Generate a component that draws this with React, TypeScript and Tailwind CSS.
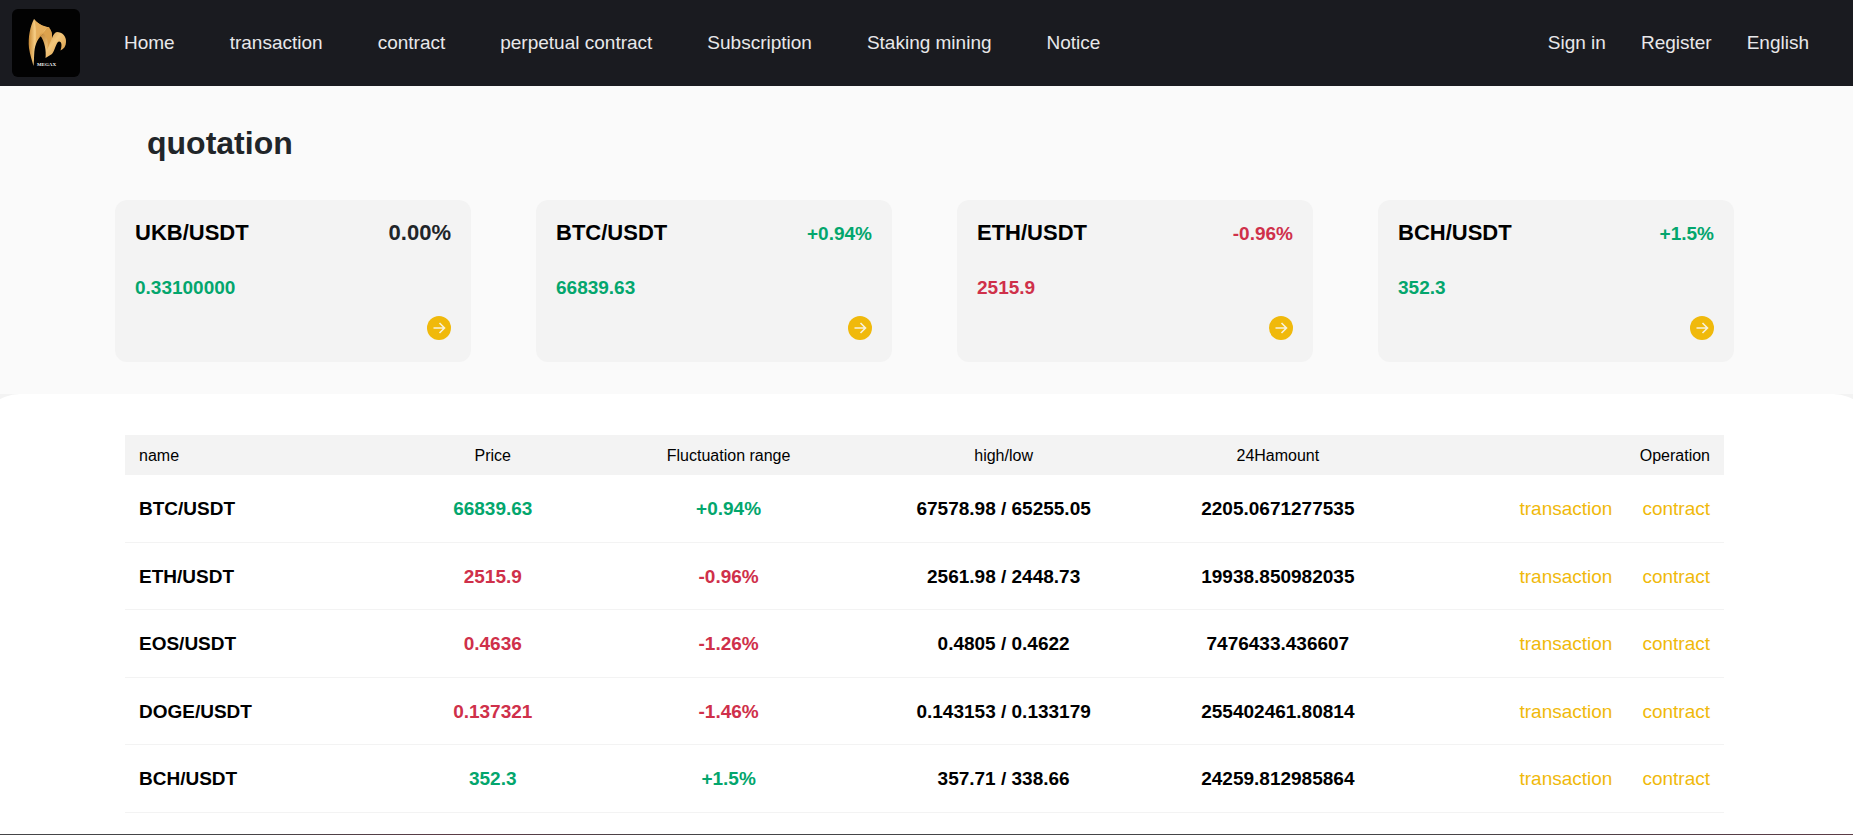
import clsx from 'clsx'

type Quote = {
  pair: string
  price: string
  change: string
  isUp: boolean
  highLow: string
  amount: string
}

const NAV_ITEMS = [
  'Home',
  'transaction',
  'contract',
  'perpetual contract',
  'Subscription',
  'Staking mining',
  'Notice',
]

const CARDS = [
  { pair: 'UKB/USDT', price: '0.33100000', change: '0.00%', trend: 'flat' },
  { pair: 'BTC/USDT', price: '66839.63', change: '+0.94%', trend: 'up' },
  { pair: 'ETH/USDT', price: '2515.9', change: '-0.96%', trend: 'down' },
  { pair: 'BCH/USDT', price: '352.3', change: '+1.5%', trend: 'up' },
]

const QUOTES: Quote[] = [
  {
    pair: 'BTC/USDT',
    price: '66839.63',
    change: '+0.94%',
    isUp: true,
    highLow: '67578.98 / 65255.05',
    amount: '2205.0671277535',
  },
  {
    pair: 'ETH/USDT',
    price: '2515.9',
    change: '-0.96%',
    isUp: false,
    highLow: '2561.98 / 2448.73',
    amount: '19938.850982035',
  },
  {
    pair: 'EOS/USDT',
    price: '0.4636',
    change: '-1.26%',
    isUp: false,
    highLow: '0.4805 / 0.4622',
    amount: '7476433.436607',
  },
  {
    pair: 'DOGE/USDT',
    price: '0.137321',
    change: '-1.46%',
    isUp: false,
    highLow: '0.143153 / 0.133179',
    amount: '255402461.80814',
  },
  {
    pair: 'BCH/USDT',
    price: '352.3',
    change: '+1.5%',
    isUp: true,
    highLow: '357.71 / 338.66',
    amount: '24259.812985864',
  },
]

const Logo = () => (
  <svg viewBox="0 0 68 68" className="size-[68px] shrink-0" role="img" aria-label="MEGAX">
    <defs>
      <linearGradient id="gold" x1="0" y1="0" x2="1" y2="0">
        <stop offset="0" stopColor="#c98a35" />
        <stop offset="0.3" stopColor="#f6cd85" />
        <stop offset="0.55" stopColor="#d99a44" />
        <stop offset="0.8" stopColor="#f0bd6c" />
        <stop offset="1" stopColor="#d7963f" />
      </linearGradient>
      <linearGradient id="goldFold" x1="0" y1="0" x2="1" y2="1">
        <stop offset="0" stopColor="#b87a2c" />
        <stop offset="0.5" stopColor="#f3c77c" />
        <stop offset="1" stopColor="#d6953e" />
      </linearGradient>
    </defs>
    <rect width="68" height="68" rx="6" fill="#020202" />
    <path
      d="M22 10C18 18 16 28 17 39C18 46 20 51 21.500 57C22.500 50 21.500 41 24 35C25.500 31 27 29 29 27L37 18.500C31 18 25 14 22 10Z"
      fill="url(#gold)"
    />
    <path d="M22 10C25 14 31 17.500 38 18.500C32 20 27 25 23.500 34C25 25 24 17 22 10Z" fill="#e5ae5c" />
    <path
      d="M28.500 27L36.500 18.500C39 20 40.500 25 40 29C41.500 25.500 43 23 45 23C50 23 54.500 27 54 33C54 37 52 40 48.500 41.500C50 37 50 32.500 47 32.500C44 33 43 42 40 45L33.500 49C34.500 42 32.500 32 28.500 27Z"
      fill="url(#goldFold)"
    />
    <path d="M36.500 18.500C39 20 40.500 25 40 29L35 41C37 33 35 27 31 24.500Z" fill="#dda24d" />
    <text
      x="34.500"
      y="57"
      textAnchor="middle"
      fontFamily="Liberation Serif, serif"
      fontWeight="700"
      fontSize="5"
      fill="#f2f2f2"
    >
      MEGAX
    </text>
  </svg>
)

const ArrowIcon = () => (
  <svg viewBox="0 0 24 24" className="size-6" aria-hidden="true">
    <circle cx="12" cy="12" r="12" fill="#f0b90b" />
    <path d="M6.5 12H17.5M12.5 7L17.5 12L12.5 17" fill="none" stroke="#f8f1dc" strokeWidth="1.6" />
  </svg>
)

const Header = () => (
  <header className="flex h-[86px] items-center bg-[#1a1b20] pl-3 pr-11 text-[19px] text-[#e8e8ea]">
    <a href="#">
      <Logo />
    </a>
    <nav className="ml-11 flex gap-[55px] whitespace-nowrap">
      {NAV_ITEMS.map((item) => (
        <a key={item} href="#">
          {item}
        </a>
      ))}
    </nav>
    <div className="ml-auto flex gap-[35px] whitespace-nowrap">
      <a href="#">Sign in</a>
      <a href="#">Register</a>
      <button type="button">English</button>
    </div>
  </header>
)

const App = () => {
  return (
    <div className="bg-[#fafafa] font-['Liberation_Sans',Arial,sans-serif] text-black">
      <Header />
      <section className="pl-[115px] pr-[119px] pb-8">
        <h1 className="px-8 py-[33px] text-[32px] leading-[48px] font-bold text-[#212529]">quotation</h1>
        <div className="grid grid-cols-4 gap-[65px]">
          {CARDS.map(({ pair, price, change, trend }) => (
            <article key={pair} className="rounded-xl bg-[#f3f3f3] px-5 pt-[17px] pb-[22px]">
              <div className="flex h-8 items-baseline justify-between leading-8 font-bold">
                <h2 className="text-[22px]">{pair}</h2>
                <span
                  className={clsx(
                    trend === 'flat' && 'text-[22px] text-[#212529]',
                    trend === 'up' && 'text-[19px] text-[#03a66d]',
                    trend === 'down' && 'text-[19px] text-[#cf304a]',
                  )}
                >
                  {change}
                </span>
              </div>
              <div
                className={clsx(
                  'mt-[23px] text-[19px] leading-8 font-bold',
                  trend === 'down' ? 'text-[#cf304a]' : 'text-[#03a66d]',
                )}
              >
                {price}
              </div>
              <a href="#" aria-label={`Open ${pair}`} className="mt-3 ml-auto block w-6">
                <ArrowIcon />
              </a>
            </article>
          ))}
        </div>
      </section>

      <section className="overflow-hidden bg-[#f3f3f3]">
        <div className="-mx-5 rounded-t-[40px] bg-white pt-[41px] pr-[149px] pb-[21px] pl-[145px]">
          <table className="w-full table-fixed text-center text-[19px] leading-[1.4]">
            <thead className="bg-[#f3f3f3] text-base leading-6">
              <tr>
                <th className="w-[15.6%] px-3.5 pt-[9px] pb-[7px] text-left font-normal">name</th>
                <th className="w-[14.8%] pt-[9px] pb-[7px] font-normal">Price</th>
                <th className="w-[14.7%] pt-[9px] pb-[7px] font-normal">Fluctuation range</th>
                <th className="w-[19.7%] pt-[9px] pb-[7px] font-normal">high/low</th>
                <th className="w-[14.6%] pt-[9px] pb-[7px] font-normal">24Hamount</th>
                <th className="px-3.5 pt-[9px] pb-[7px] text-right font-normal">Operation</th>
              </tr>
            </thead>
            <tbody>
              {QUOTES.map(({ pair, price, change, isUp, highLow, amount }) => (
                <tr key={pair} className="border-b border-[#f3f3f3] font-bold">
                  <td className="px-3.5 pt-[21px] pb-[19px] text-left">{pair}</td>
                  <td className={clsx('pt-[21px] pb-[19px]', isUp ? 'text-[#03a66d]' : 'text-[#cf304a]')}>{price}</td>
                  <td className={clsx('pt-[21px] pb-[19px]', isUp ? 'text-[#03a66d]' : 'text-[#cf304a]')}>{change}</td>
                  <td className="pt-[21px] pb-[19px]">{highLow}</td>
                  <td className="pt-[21px] pb-[19px]">{amount}</td>
                  <td className="px-3.5 pt-[21px] pb-[19px] font-normal text-[#f0b90b]">
                    <div className="flex justify-end gap-[30px]">
                      <a href="#">transaction</a>
                      <a href="#">contract</a>
                    </div>
                  </td>
                </tr>
              ))}
            </tbody>
          </table>
        </div>
      </section>

      <footer className="h-px bg-[linear-gradient(90deg,#454547,#454547_12%,#5c3c46_25%,#454547_38%,#454547_75%,#5c3c46)]" />
    </div>
  )
}

export default App
